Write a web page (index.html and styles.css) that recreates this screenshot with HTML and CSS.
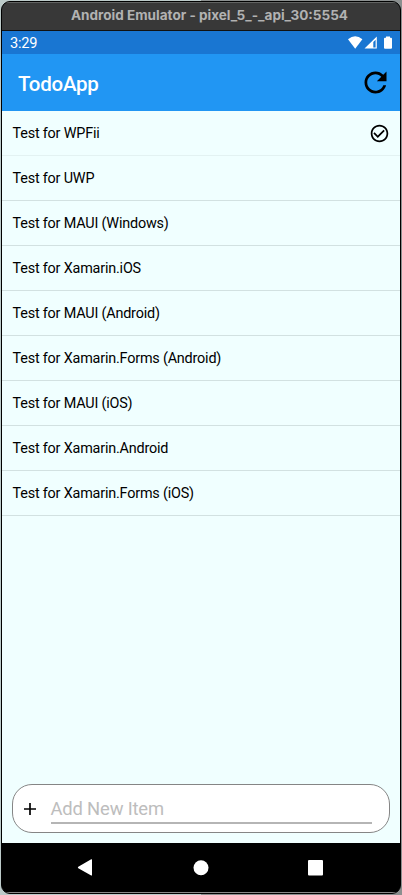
FILE: index.html
```html
<!DOCTYPE html>
<html lang="en">
<head>
<meta charset="utf-8">
<title>TodoApp</title>
<link rel="stylesheet" href="styles.css">
</head>
<body>
<div class="window">
  <div class="titlebar"><svg class="title" width="280" height="20"><text x="0" y="13" textLength="277" lengthAdjust="spacingAndGlyphs">Android Emulator - pixel_5_-_api_30:5554</text></svg></div>
  <div class="status">
    <span class="clock">3:29</span>
    <svg class="status-icons" width="46" height="14" viewBox="0 0 46 14" fill="#fff">
      <path d="M0 3.2Q7.2-2.6 14.4 3.2L7.2 12.8Z"/>
      <path fill-rule="evenodd" d="M16.5 12.6 28.8.6V12.6ZM25.3 6V11.5H27.6V3.7Z"/>
      <path d="M38 .5h4v1.3h1q1 0 1 1v9q0 1-1 1h-6q-1 0-1-1v-9q0-1 1-1h1z"/>
    </svg>
  </div>
  <header class="appbar">
    <h1>TodoApp</h1>
    <svg class="refresh" viewBox="0 0 24 24"><path d="M17.65 6.35C16.2 4.9 14.21 4 12 4c-4.42 0-7.99 3.58-7.99 8s3.57 8 7.99 8c3.73 0 6.84-2.55 7.73-6h-2.08c-.82 2.33-3.04 4-5.65 4-3.31 0-6-2.69-6-6s2.69-6 6-6c1.66 0 3.14.69 4.22 1.78L13 11h7V4l-2.35 2.35z"/></svg>
  </header>
  <main>
    <ul class="list">
      <li class="faint"><span>Test for WPFii</span><svg class="check" viewBox="0 0 24 24"><path d="M16.59 7.58 10 14.17l-3.59-3.58L5 12l5 5 8-8zM12 2C6.48 2 2 6.48 2 12s4.48 10 10 10 10-4.48 10-10S17.52 2 12 2zm0 18c-4.42 0-8-3.58-8-8s3.58-8 8-8 8 3.58 8 8-3.58 8-8 8z"/></svg></li>
      <li><span>Test for UWP</span></li>
      <li><span>Test for MAUI (Windows)</span></li>
      <li><span>Test for Xamarin.iOS</span></li>
      <li><span>Test for MAUI (Android)</span></li>
      <li><span>Test for Xamarin.Forms (Android)</span></li>
      <li><span>Test for MAUI (iOS)</span></li>
      <li><span>Test for Xamarin.Android</span></li>
      <li><span>Test for Xamarin.Forms (iOS)</span></li>
    </ul>
    <div class="entry">
      <svg class="plus" width="12" height="12" viewBox="0 0 12 12"><path d="M6 0V12M0 6H12" stroke="#000" stroke-width="1.7"/></svg>
      <div class="field">Add New Item</div>
    </div>
  </main>
  <nav class="navbar">
    <svg width="398" height="49" viewBox="0 0 398 49" fill="#fff">
      <path d="M76.3 23.8 89.2 16.3q.8-.4.8.5V32q0 .9-.8.4L76.3 25.2q-1-.7 0-1.4z"/>
      <circle cx="199" cy="24.7" r="7.5"/>
      <rect x="306" y="17" width="15" height="15.5" rx="1"/>
    </svg>
  </nav>
</div>
</body>
</html>
```
FILE: styles.css
```css
* { box-sizing: border-box; }

body {
  margin: 0;
  padding: 1px 1px 1px;
  height: 895px;
  background: linear-gradient(90deg, #bccac9 50%, #8b8f8f 50%);
  font-family: Roboto, sans-serif;
  color: #000;
}

.window {
  display: flex;
  flex-direction: column;
  height: 893px;
  border: 1px solid #000;
  border-radius: 9px;
  background: #000;
  overflow: hidden;
}

.titlebar {
  display: flex;
  justify-content: center;
  height: 29px;
  padding: 4px 0 0 19px;
  background: #383838;
  border-top: 1px solid #626362;
  border-bottom: 1px solid #111;
}

.title text {
  font: 700 13px Inter, sans-serif;
  fill: #b2b2b2;
}

.status {
  display: flex;
  justify-content: space-between;
  height: 23px;
  padding: 0 7px 0 8px;
  background: #1976d2;
  color: #fff;
}

.clock {
  font-size: 14.6px;
  line-height: 24px;
  letter-spacing: -0.2px;
}

.status-icons {
  margin: 5px -1px 0 0;
}

.appbar {
  display: flex;
  align-items: center;
  justify-content: space-between;
  height: 57px;
  padding: 0 8px 0 16px;
  background: #2196f3;
  color: #fff;
}

h1 {
  margin: 3px 0 0;
  font-size: 20.5px;
  font-weight: 500;
  line-height: 24px;
  letter-spacing: -0.25px;
}

.refresh {
  width: 33px;
  height: 33px;
  fill: #000;
}

main {
  display: flex;
  flex-direction: column;
  justify-content: space-between;
  height: 732px;
  padding: 0 10px 10px;
  background: #f0ffff;
}

.list {
  margin: 0 -10px;
  padding: 0;
  list-style: none;
}

.list li {
  display: flex;
  align-items: center;
  justify-content: space-between;
  height: 45px;
  padding: 0 10px 0 10.5px;
  border-bottom: 1px solid #d2e1e1;
  font-size: 14.4px;
  letter-spacing: -0.19px;
}

.list .faint { border-color: #e3f2f2; }

.check {
  width: 21px;
  height: 21px;
}

.entry {
  display: flex;
  align-items: center;
  height: 49px;
  padding: 0 17px 0 11px;
  background: #fff;
  border: 1px solid #858585;
  border-radius: 20px;
}

.field {
  flex: 1;
  height: 31px;
  margin: 0 0 0 14.5px;
  border-bottom: 2px solid #b5b5b5;
  color: #bdbdbd;
  font-size: 18.4px;
  line-height: 32px;
  letter-spacing: -0.17px;
}

.navbar {
  height: 50px;
  border-bottom: 1px solid #888;
}
```
